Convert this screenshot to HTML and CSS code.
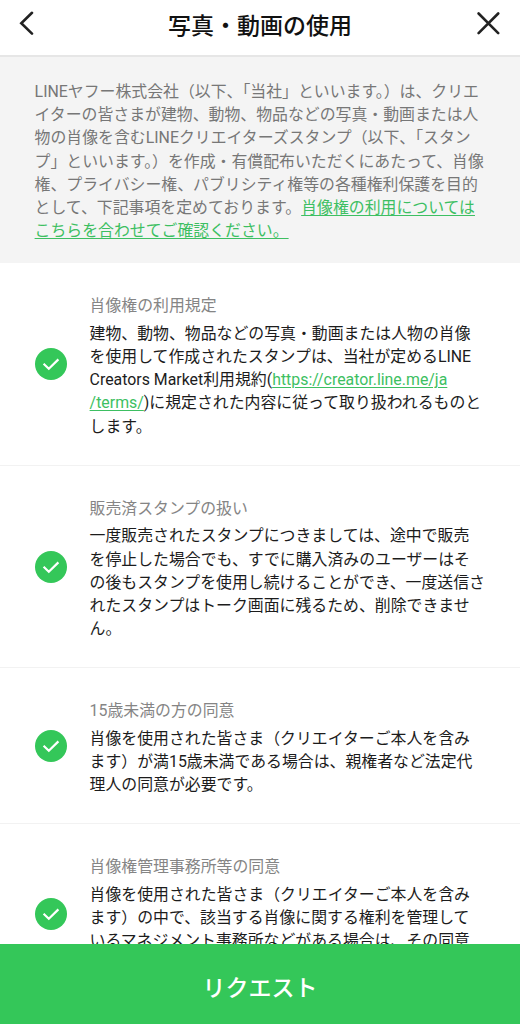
FILE: index.html
```html
<!DOCTYPE html>
<html lang="ja">
<head>
<meta charset="utf-8">
<title>写真・動画の使用</title>
<link rel="stylesheet" href="styles.css">
</head>
<body>
<div class="screen">
  <header class="header">
    <svg class="icon back" viewBox="0 0 24 24"><path d="M17 1.8 6.3 12.2l10.7 10.4"/></svg>
    <h1 class="title">写真・動画の使用</h1>
    <svg class="icon close" viewBox="0 0 24 24"><path d="M2.6 2.5l19.6 19.6M22.2 2.5 2.6 22.1"/></svg>
  </header>
  <main class="content">
    <p class="intro">LINEヤフー株式会社（以下、「当社」といいます。）は、クリエ<br>イターの皆さまが建物、動物、物品などの写真・動画または人<br>物の肖像を含むLINEクリエイターズスタンプ（以下、「スタン<br>プ」といいます。）を作成・有償配布いただくにあたって、肖像<br>権、プライバシー権、パブリシティ権等の各種権利保護を目的<br>として、下記事項を定めております。<a class="link">肖像権の利用については<br>こちらを合わせてご確認ください。</a></p>
    <section class="item">
      <svg class="check" viewBox="0 0 32 32"><circle cx="16" cy="16" r="16"/><path d="M8.6 15.8l5.2 5 9.6-9.4"/></svg>
      <div class="text">
        <h2 class="item-title">肖像権の利用規定</h2>
        <p class="body">建物、動物、物品などの写真・動画または人物の肖像<br>を使用して作成されたスタンプは、当社が定めるLINE<br>Creators Market利用規約(<a class="link">https://creator.line.me/ja<br>/terms/</a>)に規定された内容に従って取り扱われるものと<br>します。</p>
      </div>
    </section>
    <section class="item">
      <svg class="check" viewBox="0 0 32 32"><circle cx="16" cy="16" r="16"/><path d="M8.6 15.8l5.2 5 9.6-9.4"/></svg>
      <div class="text">
        <h2 class="item-title">販売済スタンプの扱い</h2>
        <p class="body">一度販売されたスタンプにつきましては、途中で販売<br>を停止した場合でも、すでに購入済みのユーザーはそ<br>の後もスタンプを使用し続けることができ、一度送信さ<br>れたスタンプはトーク画面に残るため、削除できませ<br>ん。</p>
      </div>
    </section>
    <section class="item">
      <svg class="check" viewBox="0 0 32 32"><circle cx="16" cy="16" r="16"/><path d="M8.6 15.8l5.2 5 9.6-9.4"/></svg>
      <div class="text">
        <h2 class="item-title">15歳未満の方の同意</h2>
        <p class="body">肖像を使用された皆さま（クリエイターご本人を含み<br>ます）が満15歳未満である場合は、親権者など法定代<br>理人の同意が必要です。</p>
      </div>
    </section>
    <section class="item last">
      <svg class="check" viewBox="0 0 32 32"><circle cx="16" cy="16" r="16"/><path d="M8.6 15.8l5.2 5 9.6-9.4"/></svg>
      <div class="text">
        <h2 class="item-title">肖像権管理事務所等の同意</h2>
        <p class="body">肖像を使用された皆さま（クリエイターご本人を含み<br>ます）の中で、該当する肖像に関する権利を管理して<br>いるマネジメント事務所などがある場合は、その同意</p>
      </div>
    </section>
  </main>
  <button class="request">リクエスト</button>
</div>
</body>
</html>
```
FILE: styles.css
```css
* { box-sizing: border-box; margin: 0; padding: 0; }
body {
  font-family: Roboto, "Noto Sans CJK JP", sans-serif;
  font-size: 15.89px;
  line-height: 23.2px;
  color: #1c1c1c;
  background: #fff;
}
.screen { height: 1024px; display: flex; flex-direction: column; overflow: hidden; }
.header {
  flex: none;
  height: 57px;
  padding: 0 20px 9px 15px;
  display: grid;
  grid-template-columns: 24px 1fr 24px;
  align-items: center;
  border-bottom: 2px solid #e6e6e6;
}
.title { font-size: 23px; line-height: 32px; font-weight: 500; color: #111; padding: 7px 0 0 5px; text-align: center; }
.icon { width: 24px; height: 24px; fill: none; stroke: #222; stroke-width: 2.6; stroke-linecap: round; }
.content { flex: 1; min-height: 0; overflow: hidden; }
.intro {
  height: 206.3px;
  padding: 23px 0 0 34.6px;
  background: #f4f4f4;
  color: #777;
  white-space: nowrap;
}
.link { color: #3dbf62; text-decoration: underline; text-decoration-thickness: 1px; text-underline-offset: 2px; }
.item {
  display: flex;
  align-items: center;
  gap: 23px;
  padding: 31px 0 27px 34.6px;
  border-bottom: 1px solid #f2f2f2;
}
.last { height: 179.4px; align-items: flex-start; }
.check { flex: none; align-self: center; width: 32px; height: 32px; margin-top: -3.6px; }
.check circle { fill: #34c759; }
.check path { fill: none; stroke: #fff; stroke-width: 2.2; }
.text { white-space: nowrap; }
.item-title { font-size: inherit; font-weight: 400; color: #858585; margin-bottom: 4.3px; }
.request {
  flex: none;
  height: 80px;
  padding-top: 4px;
  border: 0;
  background: #34c759;
  color: #fff;
  font-family: inherit;
  font-size: 23px;
  font-weight: 500;
}
```
